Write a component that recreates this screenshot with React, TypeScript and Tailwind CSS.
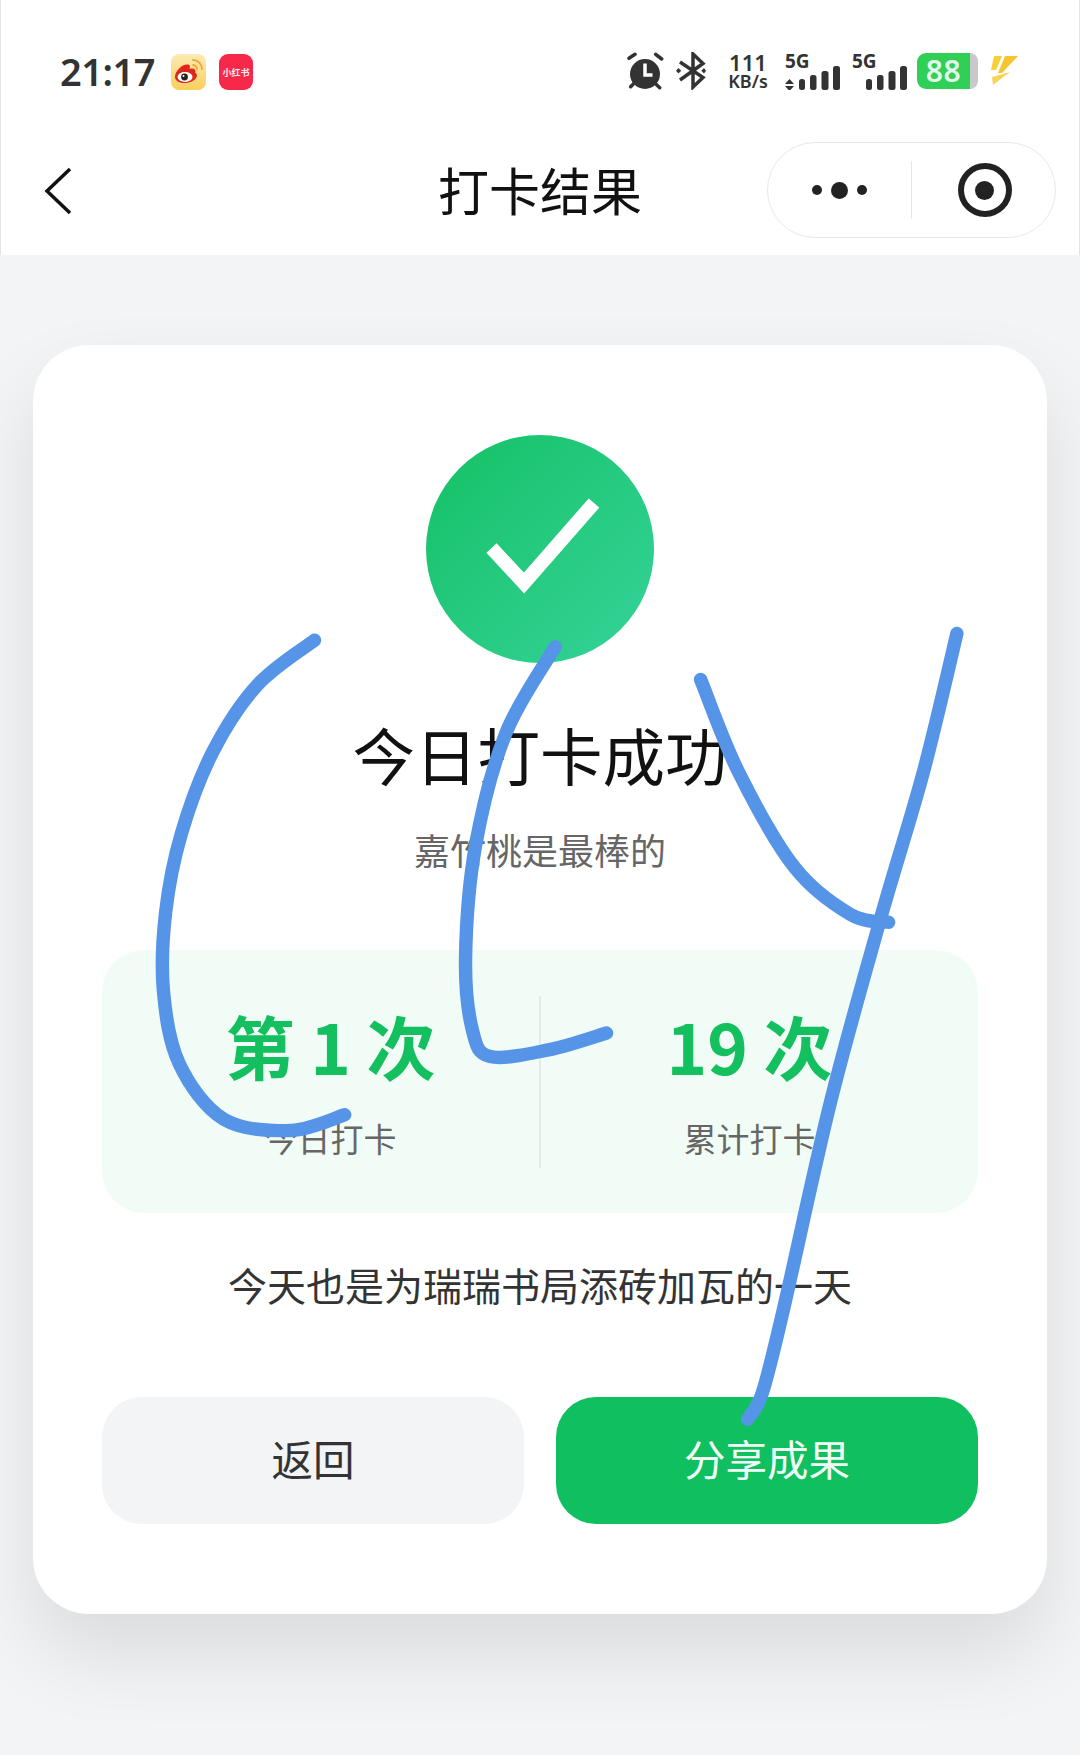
function StatusLeft() {
  return (
    <div className="mt-[2px] flex items-center">
      <span className="-mt-[3px] text-[38px] leading-none font-semibold text-[#333] font-['Noto_Sans',sans-serif] tracking-[-0.5px]">21:17</span>
      <svg className="ml-[16px]" width="35" height="36" viewBox="0 0 35 36">
        <defs>
          <linearGradient id="wb" x1="0" y1="0" x2="0" y2="1">
            <stop offset="0" stopColor="#fdebb5" />
            <stop offset="1" stopColor="#f9cf5c" />
          </linearGradient>
        </defs>
        <rect width="35" height="36" rx="8" fill="url(#wb)" />
        <path d="M4 23c0-6 7-12.500 12-12.500 3 0 3.500 2 2.500 4.500 4-1.500 7 .5 5.500 3.500 3.500 1 3 9.500-9.500 10.500C8 29.500 4 26.500 4 23z" fill="#e0261c" />
        <ellipse cx="14" cy="23" rx="7.500" ry="5" fill="#fff" />
        <circle cx="13.500" cy="23" r="3.400" fill="#222" />
        <circle cx="12.500" cy="22" r="1" fill="#fff" />
        <path d="M22 6c5 0 9 4 9 9M22 11c2 0 4 2 4 4" stroke="#f0a63c" strokeWidth="1.800" fill="none" strokeLinecap="round" />
      </svg>
      <div className="ml-[13px] w-[34px] h-[36px] rounded-[9px] bg-[#f8284a] flex items-center justify-center">
        <span className="text-[9px] leading-none font-bold text-white/90 whitespace-nowrap">小红书</span>
      </div>
    </div>
  );
}

function Signal({ arrows, className }: { arrows?: boolean; className?: string }) {
  return (
    <div className={`relative w-[56px] h-[38px] ${className}`}>
      <span className="absolute left-0 top-[-1px] text-[19px] leading-[20px] font-bold text-[#333] font-['Noto_Sans',sans-serif]">5G</span>
      <svg className="absolute inset-0" width="56" height="38" viewBox="0 0 56 38">
        {arrows && <path d="M0 32l4.500-5 4.500 5zM0 34l4.500 5 4.500-5z" fill="#333" />}
        <rect x="14" y="27" width="6" height="11" rx="2.500" fill="#333" />
        <rect x="25" y="23" width="6.500" height="15" rx="2.500" fill="#333" />
        <rect x="36.500" y="19" width="7" height="19" rx="2.500" fill="#333" />
        <rect x="48" y="14" width="7" height="24" rx="2.500" fill="#333" />
      </svg>
    </div>
  );
}

function StatusRight() {
  return (
    <div className="flex items-center">
      <svg width="38" height="38" viewBox="0 0 38 38">
        <circle cx="18" cy="22" r="15" fill="#333" />
        <path d="M18 11.500V23h7.500" stroke="#fff" strokeWidth="3.500" fill="none" />
        <path d="M2 6.300l6-4M28.700 2.300l6 4.700M3.700 34.700l3.300-3.400M28 31.300l4.700 4.400" stroke="#333" strokeWidth="3.500" strokeLinecap="round" />
      </svg>
      <svg className="ml-[11px]" width="30" height="38" viewBox="0 0 30 38">
        <path d="M17 19V2l10 9.500L4 28M17 19v16l10-9.500L4 10" stroke="#333" strokeWidth="3.500" fill="none" />
        <path d="M2.500 16l2.700 2.700-2.700 2.700L0 18.700zM28 16l2 2.700-2 2.700-2.700-2.700z" fill="#333" />
      </svg>
      <div className="ml-[20px] w-[44px] flex flex-col items-center text-[#333] font-semibold font-['Noto_Sans',sans-serif]">
        <span className="text-[22px] leading-[19px]">111</span>
        <span className="text-[18px] leading-[18px] whitespace-nowrap">KB/s</span>
      </div>
      <Signal className="ml-[15px]" arrows />
      <Signal className="ml-[11px]" />
      <div className="ml-[9px] flex items-center">
        <div className="w-[53px] h-[36px] rounded-l-[9px] bg-[#2fcf58] flex items-center justify-center">
          <span className="text-[30px] leading-none font-semibold text-[#e4fbe9] tracking-[0.5px] font-['Noto_Sans',sans-serif]">88</span>
        </div>
        <div className="w-[8px] h-[36px] bg-[#c9c9cc] rounded-r-[8px]" />
      </div>
      <svg className="ml-[12px]" width="30" height="32" viewBox="0 0 30 32">
        <path d="M4 1h8L6 15H1z" fill="#f9cf3a" />
        <path d="M15 1h13L12 18H8z" fill="#f7c531" />
        <path d="M2 22l18-5L3 30z" fill="#f9d458" />
      </svg>
    </div>
  );
}

function NavBar() {
  return (
    <div className="relative flex items-center justify-center h-[125px] pb-[1px]">
      <svg className="absolute left-[41px] top-[35px]" width="36" height="52" viewBox="0 0 36 52">
        <path d="M28 4L5 26l23 22" stroke="#111" strokeWidth="3.500" fill="none" />
      </svg>
      <span className="text-[51px] leading-none text-[#111] -mt-[5px]">打卡结果</span>
      <div className="absolute right-[23px] top-[12px] w-[289px] h-[96px] rounded-full border border-[#e8e8e8] flex items-center">
        <div className="w-[143px] flex items-center justify-center gap-[9px]">
          <span className="w-[10px] h-[10px] rounded-full bg-[#222]" />
          <span className="w-[17px] h-[17px] rounded-full bg-[#222]" />
          <span className="w-[10px] h-[10px] rounded-full bg-[#222]" />
        </div>
        <div className="w-px h-[58px] bg-[#e6e6e6]" />
        <div className="flex-1 flex items-center justify-center pl-[2px]">
          <div className="w-[54px] h-[54px] rounded-full border-[6px] border-[#222] flex items-center justify-center">
            <span className="w-[19px] h-[19px] rounded-full bg-[#222]" />
          </div>
        </div>
      </div>
    </div>
  );
}

function Stat({ value, label }: { value: string; label: string }) {
  return (
    <div className="flex-1 flex flex-col items-center">
      <span className="text-[69px] leading-[80px] font-bold text-[#14bf5f] whitespace-pre">{value}</span>
      <span className="mt-[33px] text-[33px] leading-[40px] text-[#666]">{label}</span>
    </div>
  );
}

function ResultCard() {
  return (
    <div className="mx-[33px] rounded-[56px] bg-white px-[69px] pt-[90px] pb-[90px] flex flex-col items-center shadow-[0_40px_80px_rgba(0,0,0,0.1)]">
      <div className="w-[228px] h-[228px] rounded-full bg-gradient-to-br from-[#12c164] to-[#34d399] flex items-center justify-center">
        <svg width="228" height="228" viewBox="0 0 228 228">
          <path d="M65.500 113L98 148l70-80" stroke="#fff" strokeWidth="14" fill="none" />
        </svg>
      </div>
      <h1 className="mt-[52px] text-[62.5px] leading-[78px] text-[#111]">今日打卡成功</h1>
      <p className="mt-[34px] text-[36px] leading-[44px] text-[#666]">嘉竹桃是最棒的</p>
      <div className="mt-[79px] w-full h-[263px] rounded-[42px] bg-[#f2fcf7] px-[20px] flex items-center">
        <Stat value="第 1 次" label="今日打卡" />
        <div className="w-[2px] h-[172px] bg-[#e5ebe7]" />
        <Stat value="19 次" label="累计打卡" />
      </div>
      <p className="mt-[46px] text-[39px] leading-[50px] text-[#333] whitespace-nowrap">今天也是为瑞瑞书局添砖加瓦的一天</p>
      <div className="mt-[88px] w-full flex gap-[32px]">
        <button className="flex-1 h-[127px] pb-[4px] rounded-[40px] bg-[#f3f4f6] text-[41.5px] text-[#333]">返回</button>
        <button className="flex-1 h-[127px] pb-[4px] rounded-[40px] bg-[#10c060] text-[41.5px] text-[#f2fff7]">分享成果</button>
      </div>
    </div>
  );
}

const STROKES: number[][][] = [
  [[281, 572], [230, 612], [190, 672], [162, 745], [148, 815], [146, 885], [160, 950], [200, 1000], [260, 1010], [308, 996]],
  [[496, 578], [452, 655], [425, 755], [416, 855], [422, 920], [438, 944], [490, 938], [542, 923]],
  [[626, 607], [660, 690], [710, 775], [760, 817], [794, 824]],
  [[855, 566], [825, 690], [787, 820], [742, 985], [700, 1170], [681, 1245], [668, 1268]],
];

// catmull-rom through the sampled points so the pen line stays smooth
function smooth(pts: number[][]) {
  let d = `M${pts[0][0]} ${pts[0][1]}`;
  for (let i = 0; i < pts.length - 1; i++) {
    const p0 = pts[i - 1] ?? pts[i];
    const p1 = pts[i];
    const p2 = pts[i + 1];
    const p3 = pts[i + 2] ?? p2;
    const c1x = p1[0] + (p2[0] - p0[0]) / 6;
    const c1y = p1[1] + (p2[1] - p0[1]) / 6;
    const c2x = p2[0] - (p3[0] - p1[0]) / 6;
    const c2y = p2[1] - (p3[1] - p1[1]) / 6;
    d += `C${c1x} ${c1y} ${c2x} ${c2y} ${p2[0]} ${p2[1]}`;
  }
  return d;
}

// hand-drawn pen marks on top of the screenshot, coords in the 965x1568 space
function PenMarks() {
  return (
    <svg className="absolute inset-0 pointer-events-none" width="1080" height="1755" viewBox="0 0 965 1568">
      <g stroke="#5594e6" strokeWidth="12" fill="none" strokeLinecap="round" strokeLinejoin="round">
        {STROKES.map((pts, i) => (
          <path key={i} d={smooth(pts)} />
        ))}
      </g>
    </svg>
  );
}

export default function App() {
  return (
    <div className="relative w-[1080px] h-[1755px] overflow-hidden bg-[#f3f4f6] font-['Noto_Sans_CJK_SC','Noto_Sans',sans-serif]">
      <div className="bg-white border-x border-[#e3e3e3]">
        <div className="h-[130px] pt-[52px] pl-[59px] pr-[59px] flex items-start justify-between">
          <StatusLeft />
          <StatusRight />
        </div>
        <NavBar />
      </div>
      <div className="pt-[90px]">
        <ResultCard />
      </div>
      <PenMarks />
    </div>
  );
}
